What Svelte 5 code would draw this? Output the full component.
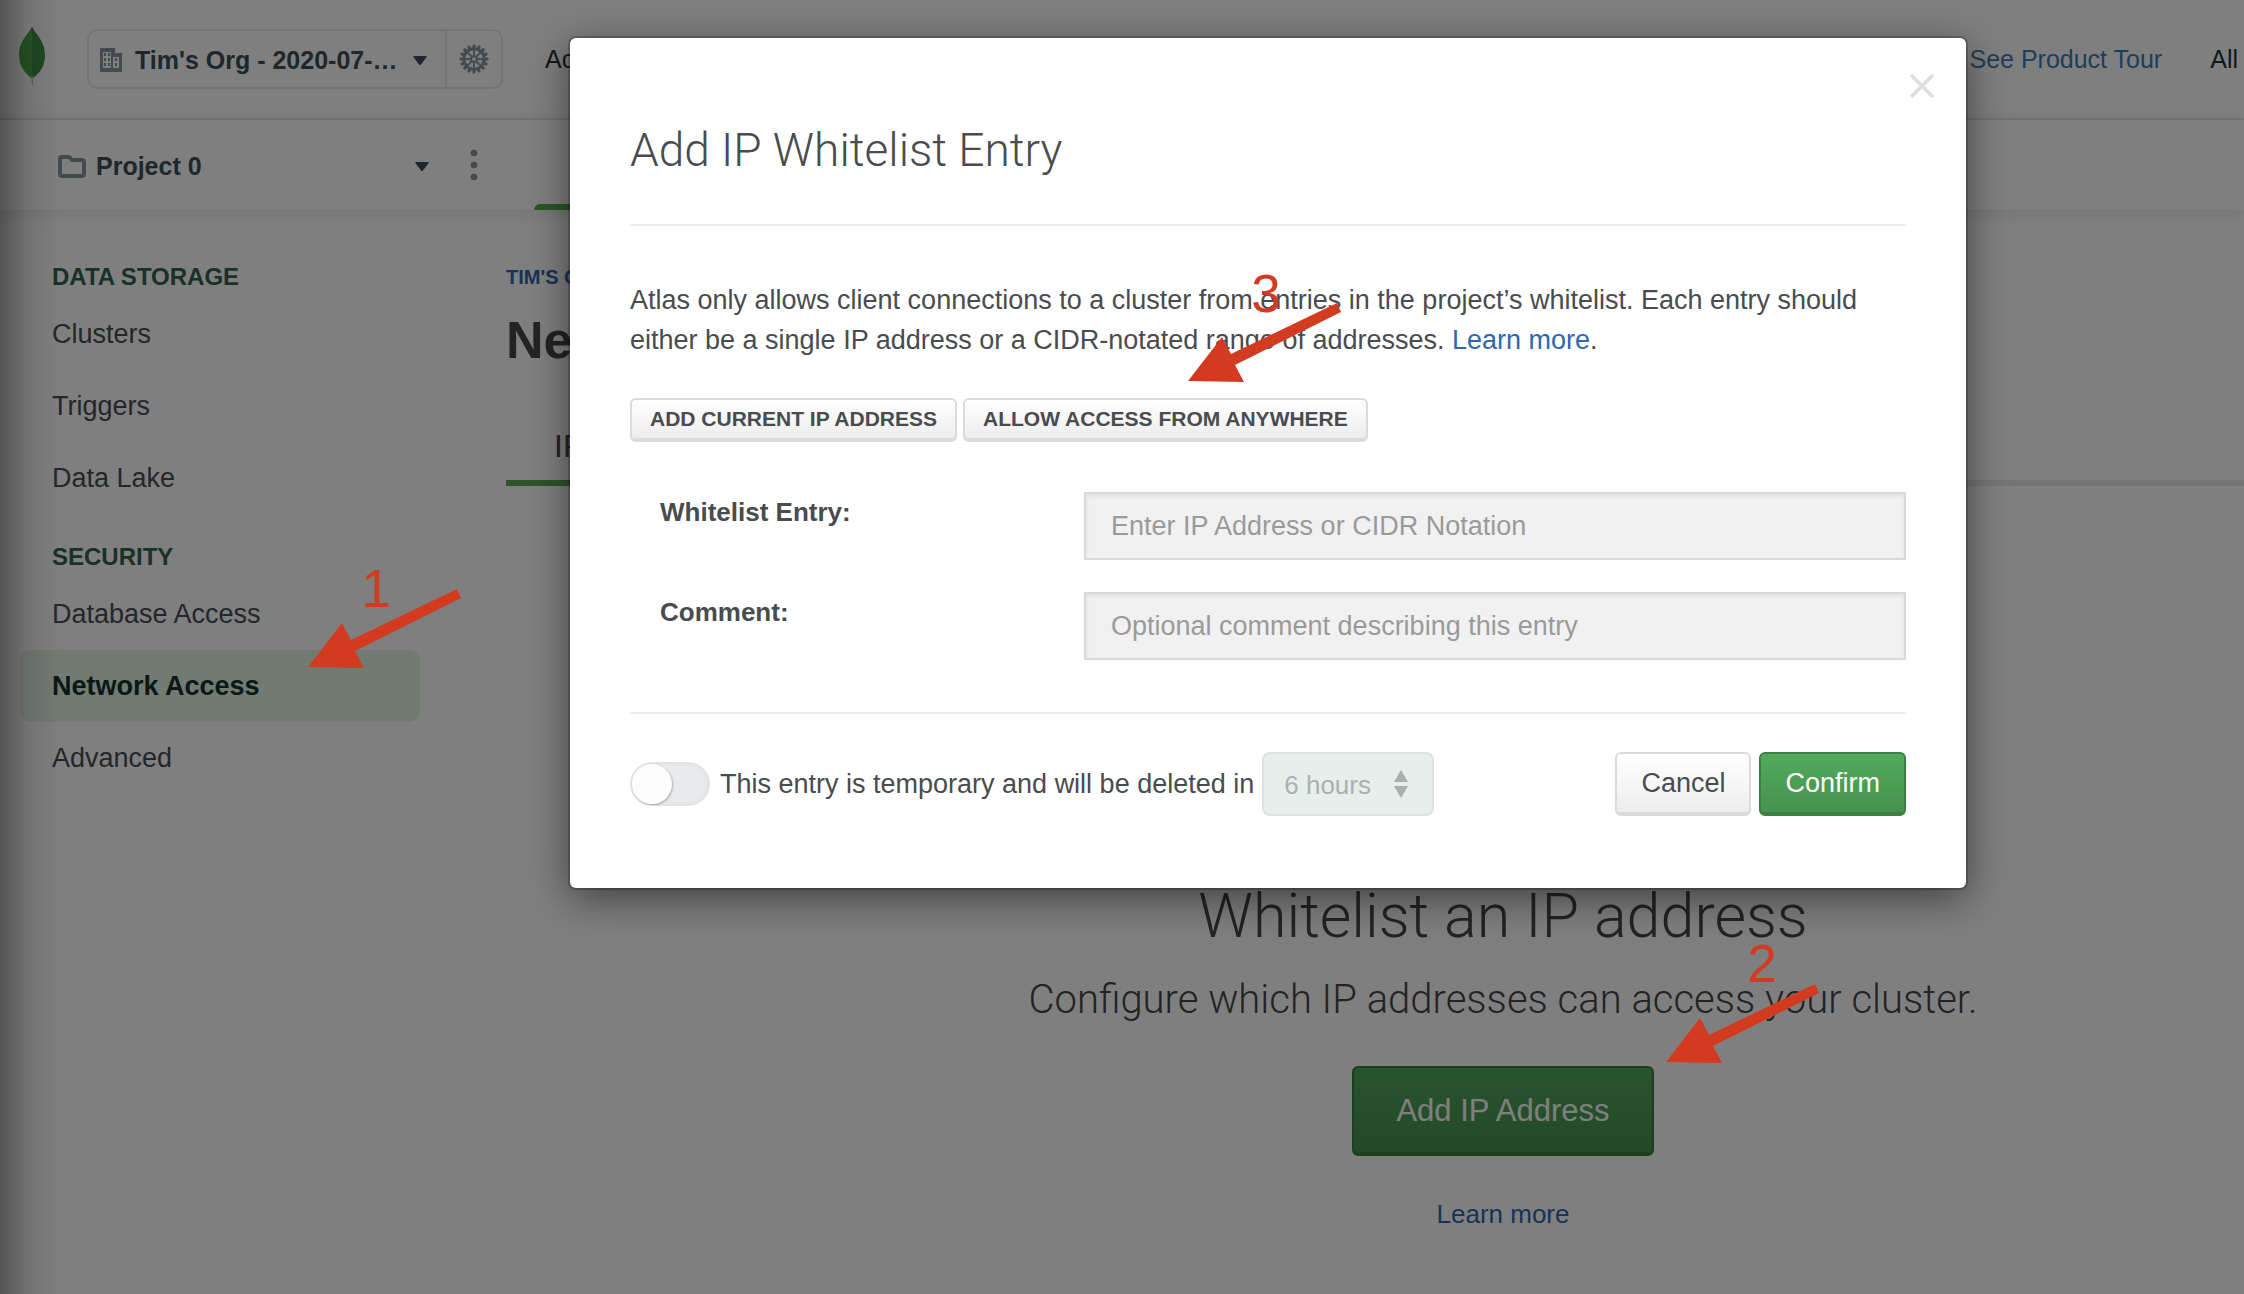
<script>
  const groups = [
    { title: 'DATA STORAGE', items: ['Clusters', 'Triggers', 'Data Lake'] },
    { title: 'SECURITY', items: ['Database Access', 'Network Access', 'Advanced'] }
  ];
  const current = 'Network Access';

  // x / y: arrow tip; nx / ny: centre and baseline of the step number, relative to the tip
  const steps = [
    { n: 1, x: 308, y: 667, nx: 68, ny: -60 },
    { n: 2, x: 1666, y: 1062, nx: 96, ny: -80 },
    { n: 3, x: 1188, y: 381, nx: 78, ny: -69 }
  ];

  const teeth = Array.from({ length: 16 }, (_, i) => i * 22.5);
  const spokes = Array.from({ length: 8 }, (_, i) => i * 45);
</script>

<div class="app">
  <header class="topbar">
    <svg class="leaf" viewBox="0 0 26 60" aria-hidden="true">
      <path d="M13 0C15 7 26 14 26 29C26 42 19 48 14 52L13 52Z" fill="#409145" />
      <path d="M13 0C11 7 0 14 0 29C0 42 8 48 12 52L13 52Z" fill="#4ba649" />
      <path d="M12 50h2l0 9h-1z" fill="#b8c4c2" />
    </svg>
    <div class="org">
      <button class="org-name">
        <svg class="building" viewBox="0 0 24 24" aria-hidden="true">
          <path fill="#89979b" fill-rule="evenodd" d="M1 0h15v5h7v19H1zM4 4v16h8V4zM14 9v11h6V9z" />
          <path fill="#89979b" d="M5 5h2v3H5zM9 5h2v3H9zM5 10h2v3H5zM9 10h2v3H9zM5 15h2v3H5zM9 15h2v3H9zM16 10h2v3h-2zM16 15h2v3h-2z" />
        </svg>
        <span>Tim's Org - 2020-07-…</span>
        <svg class="caret" viewBox="0 0 14 9" aria-hidden="true"><path d="M1 0h12q1 0 .6 1L8 8.400q-1 1-2 0L.4 1Q0 0 1 0z" fill="#3d4f58" /></svg>
      </button>
      <button class="org-settings" aria-label="Organization settings">
        <svg viewBox="-16 -16 32 32" aria-hidden="true">
          <g fill="#89979b">
            {#each teeth as a}<path d="M-2.500-10.500L-1.200-15.500H1.200L2.500-10.500z" transform="rotate({a})" />{/each}
          </g>
          <circle r="10.500" fill="none" stroke="#89979b" stroke-width="2.500" />
          <g stroke="#89979b" stroke-width="2">
            {#each spokes as a}<path d="M0-3V-10" transform="rotate({a})" />{/each}
          </g>
          <circle r="3" fill="none" stroke="#89979b" stroke-width="2" />
        </svg>
      </button>
    </div>
    <a class="top-link access" href="#access">Access Manager</a>
    <a class="top-link tour" href="#tour">See Product Tour</a>
    <a class="top-link all" href="#all">All</a>
  </header>

  <div class="projectbar">
    <button class="project">
      <svg class="folder" viewBox="0 0 28 23" aria-hidden="true">
        <path d="M2 4Q2 2 4 2H10Q12 2 13 4L14 5H24Q26 5 26 7V19Q26 21 24 21H4Q2 21 2 19Z" fill="none" stroke="#89979b" stroke-width="4" />
      </svg>
      <span>Project 0</span>
      <svg class="caret" viewBox="0 0 14 9" aria-hidden="true"><path d="M1 0h12q1 0 .6 1L8 8.400q-1 1-2 0L.4 1Q0 0 1 0z" fill="#3d4f58" /></svg>
    </button>
    <button class="more" aria-label="Project options">
      <svg viewBox="0 0 8 32" aria-hidden="true"><g fill="#89979b"><circle cx="4" cy="4" r="3.300" /><circle cx="4" cy="16" r="3.300" /><circle cx="4" cy="28" r="3.300" /></g></svg>
    </button>
    <span class="active-tab"></span>
  </div>

  <div class="body">
    <nav class="sidebar">
      {#each groups as group}
        <section>
          <h2>{group.title}</h2>
          <ul>
            {#each group.items as item}
              <li><a href="#nav" class:current={item === current}>{item}</a></li>
            {/each}
          </ul>
        </section>
      {/each}
    </nav>

    <main>
      <a class="crumb" href="#org">TIM'S ORG</a>
      <h1>Network Access</h1>
      <div class="tabs"><a href="#whitelist">IP Whitelist</a></div>
      <div class="empty">
        <h3>Whitelist an IP address</h3>
        <p>Configure which IP addresses can access your cluster.</p>
        <button class="add">Add IP Address</button>
        <a href="#learn">Learn more</a>
      </div>
    </main>
  </div>

  <div class="backdrop">
    <form class="modal" role="dialog" aria-labelledby="dialog-title" onsubmit={(e) => e.preventDefault()}>
      <button type="button" class="close" aria-label="Close">
        <svg viewBox="0 0 24 24" aria-hidden="true"><path d="M1 1L23 23M23 1L1 23" stroke="#dcdedf" stroke-width="3.500" /></svg>
      </button>
      <h2 id="dialog-title">Add IP Whitelist Entry</h2>
      <div class="modal-body">
        <p>
          Atlas only allows client connections to a cluster from entries in the project’s whitelist. Each entry should
          either be a single IP address or a CIDR-notated range of addresses. <a href="#learn-more">Learn more</a>.
        </p>
        <div class="quick">
          <button type="button">ADD CURRENT IP ADDRESS</button>
          <button type="button">ALLOW ACCESS FROM ANYWHERE</button>
        </div>
        <div class="field">
          <label for="entry">Whitelist Entry:</label>
          <input id="entry" type="text" placeholder="Enter IP Address or CIDR Notation" />
        </div>
        <div class="field">
          <label for="comment">Comment:</label>
          <input id="comment" type="text" placeholder="Optional comment describing this entry" />
        </div>
      </div>
      <footer>
        <input id="temporary" class="toggle" type="checkbox" />
        <label for="temporary">This entry is temporary and will be deleted in</label>
        <div class="duration">
          <select aria-label="Delete after" disabled><option>6 hours</option></select>
          <svg viewBox="0 0 14 28" aria-hidden="true"><path d="M7 0L14 12H0zM0 16H14L7 28z" fill="#a9b0b0" /></svg>
        </div>
        <button type="button" class="cancel">Cancel</button>
        <button type="submit" class="confirm">Confirm</button>
      </footer>
    </form>
  </div>

  <div class="edge"></div>

  <svg class="annotations" aria-hidden="true">
    {#each steps as s}
      <g transform="translate({s.x} {s.y})" fill="#d23b20">
        <path d="M0 0L34-44L43-27L149-78L153-69L47-16L56 1Z" />
        <text x={s.nx} y={s.ny} text-anchor="middle">{s.n}</text>
      </g>
    {/each}
  </svg>
</div>

<style>
  :global(body) { background: #fff; }
  .app {
    position: relative;
    min-height: 100vh;
    overflow: hidden;
    background: #fff;
    color: #494747;
    font-family: "Liberation Sans", Arial, sans-serif;
    font-size: 27px;
    line-height: 40px;
  }
  .app *, .app *::before { box-sizing: border-box; }
  h1, h2, h3, p, ul { margin: 0; padding: 0; }
  ul { list-style: none; }
  a { color: #2e67b1; text-decoration: none; }
  button, input, select { font: inherit; color: inherit; margin: 0; }
  button { padding: 0; border: 0; background: none; white-space: nowrap; }
  svg { display: block; flex: none; }

  .topbar {
    display: flex;
    align-items: center;
    height: 120px;
    padding: 0 6px 0 19px;
    border-bottom: 2px solid #ebebeb;
  }
  .leaf { width: 26px; height: 60px; margin: 0 42px 6px 0; }
  .org {
    display: flex;
    height: 60px;
    border: 2px solid #e7eaea;
    border-radius: 10px;
    margin-right: 42px;
  }
  .org-name {
    display: flex;
    align-items: center;
    width: 356px;
    padding: 2px 18px 0 10px;
    color: #3d4f58;
    font-weight: 700;
    font-size: 25px;
  }
  .building { width: 24px; height: 24px; margin-right: 12px; }
  .caret { width: 14px; height: 9px; }
  .org-name .caret, .project .caret { margin-left: auto; }
  .org-settings { width: 56px; border-left: 2px solid #e7eaea; display: grid; place-items: center; }
  .org-settings svg { width: 30px; height: 30px; }
  .top-link { font-size: 25px; color: #21313c; }
  .tour { margin-left: auto; color: #3d7fb5; }
  .all { margin-left: 48px; }

  .projectbar {
    position: relative;
    display: flex;
    align-items: center;
    height: 90px;
    padding-left: 58px;
    box-shadow: 0 2px 16px rgba(61, 90, 120, 0.16);
  }
  .project { display: flex; align-items: center; width: 371px; gap: 10px; padding-top: 2px; color: #3d4f58; font-weight: 700; font-size: 25px; }
  .folder { width: 28px; height: 23px; }
  .more { margin-left: 41px; }
  .more svg { width: 8px; height: 32px; }
  .active-tab { width: 200px; height: 6px; margin-left: 56px; align-self: flex-end; background: #58aa50; border-radius: 6px 6px 0 0; }

  .body { display: flex; width: calc(100% + 256px); }
  .sidebar { flex: none; width: 486px; padding: 46px 66px 0 20px; }
  .sidebar section { margin-bottom: 22px; }
  .sidebar h2 { padding-left: 32px; font-size: 24px; line-height: 42px; color: #32624f; }
  .sidebar a { display: block; padding-left: 32px; line-height: 72px; color: #494f53; border-radius: 10px; }
  .sidebar .current { background: #e4f4e4; color: #13322b; font-weight: 700; }

  main { flex: 1; padding: 46px 0 0 20px; }
  .crumb { display: block; font-size: 20px; font-weight: 700; line-height: 42px; }
  h1 { font-size: 52px; line-height: 84px; color: #494747; }
  .tabs { display: flex; height: 104px; box-shadow: inset 0 -6px #ebebeb; }
  .tabs a { padding: 44px 48px 0; font-size: 32px; color: #494747; border-bottom: 6px solid #58aa50; }
  .empty { display: flex; flex-direction: column; align-items: center; padding-top: 388px; }
  .empty h3 { font-family: Roboto, sans-serif; font-weight: 300; font-size: 61px; line-height: 84px; }
  .empty p { font-family: Roboto, sans-serif; font-weight: 300; font-size: 40px; line-height: 84px; }
  .add {
    height: 90px;
    margin: 24px 0 38px;
    padding: 2px 42px 0;
    border: 2px solid #3a7f3d;
    border-bottom-width: 4px;
    border-radius: 6px;
    background: linear-gradient(#52aa5c, #46924f);
    color: #fff;
    font-size: 31px;
  }
  .empty a { font-size: 26px; }

  .backdrop {
    position: absolute;
    inset: 0 -292px 0 0;
    display: flex;
    justify-content: center;
    align-items: flex-start;
    padding: 38px 60px;
    background: rgba(0, 0, 0, 0.5);
  }
  .modal {
    position: relative;
    width: 100%;
    max-width: 1396px;
    padding: 80px 60px 72px;
    border-radius: 6px;
    background: #fff;
    box-shadow: 0 0 0 2px rgba(0, 0, 0, 0.2), 0 10px 40px rgba(0, 0, 0, 0.5);
    color: #494c4e;
  }
  .close { position: absolute; top: 36px; right: 32px; }
  .close svg { width: 24px; height: 24px; }
  .modal h2 {
    padding-bottom: 42px;
    border-bottom: 2px solid #ebebed;
    font-family: Roboto, sans-serif;
    font-weight: 300;
    font-size: 46px;
    line-height: 64px;
  }
  .modal-body { padding: 54px 0 52px; border-bottom: 2px solid #ebebed; }
  .quick { display: flex; gap: 6px; margin: 38px 0 50px; }
  .quick button, .cancel {
    border: 2px solid #dadbdc;
    border-bottom-width: 4px;
    border-radius: 6px;
    background: linear-gradient(#fff, #ededed);
  }
  .quick button { height: 44px; padding: 0 18px; font-size: 21px; line-height: 36px; font-weight: 700; }
  .field { display: flex; align-items: flex-start; justify-content: space-between; padding-left: 30px; }
  .field + .field { margin-top: 32px; }
  .field label { font-size: 26px; font-weight: 700; }
  .field input {
    width: 822px;
    height: 68px;
    padding: 0 25px;
    border: 2px solid #d8d9da;
    border-radius: 0;
    background: #f1f1f1;
    box-shadow: inset 0 2px 4px rgba(0, 0, 0, 0.07);
  }
  .field input::placeholder { color: #9a9a9a; opacity: 1; }
  footer { display: flex; align-items: center; padding-top: 38px; }
  footer label { white-space: nowrap; }
  .toggle {
    appearance: none;
    width: 80px;
    height: 44px;
    padding: 2px;
    margin-right: 10px;
    border-radius: 22px;
    background: #e9eaec;
    box-shadow: inset 0 0 6px rgba(0, 0, 0, 0.08);
  }
  .toggle::before {
    content: "";
    display: block;
    width: 40px;
    height: 40px;
    border-radius: 50%;
    background: #fdfdfd;
    box-shadow: 1px 1px 2px rgba(0, 0, 0, 0.25);
  }
  .duration {
    display: flex;
    align-items: center;
    width: 172px;
    height: 64px;
    margin: 0 auto 0 8px;
    padding: 0 24px 0 20px;
    border: 2px solid #dde2e1;
    border-radius: 8px;
    background: #e7eeec;
  }
  .duration select { appearance: none; flex: 1; min-width: 0; padding: 2px 0 0; border: 0; background: none; color: #a9b0b0; font-size: 26px; opacity: 1; }
  .duration svg { width: 14px; height: 28px; }
  .cancel, .confirm { height: 64px; padding: 0 24px; }
  .confirm {
    margin-left: 8px;
    border: 2px solid #3d8045;
    border-bottom-width: 4px;
    border-radius: 6px;
    background: linear-gradient(#52aa5c, #46924f);
    color: #fff;
  }

  .edge { position: absolute; inset: 0 auto 0 0; width: 60px; background: linear-gradient(90deg, rgba(0, 0, 0, 0.35), rgba(0, 0, 0, 0.1) 45%, transparent); }
  .annotations { position: absolute; inset: 0; width: 100%; height: 100%; pointer-events: none; font-size: 53px; }
</style>
